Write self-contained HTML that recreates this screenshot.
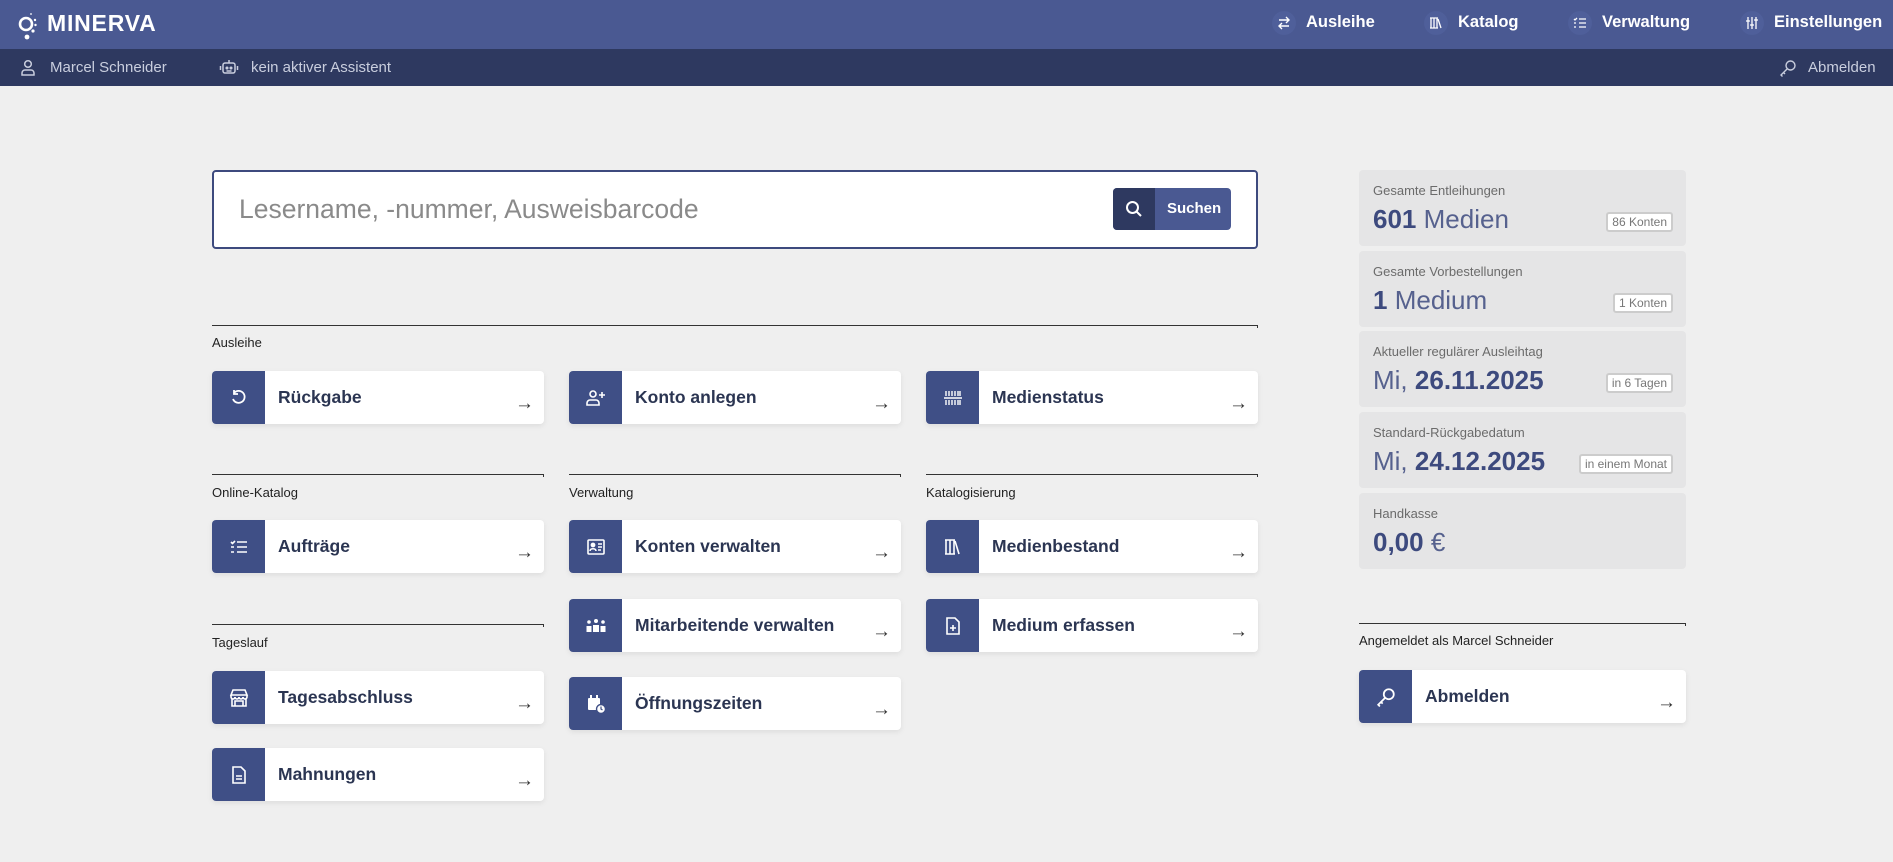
<!DOCTYPE html>
<html><head><meta charset="utf-8"><style>
*{box-sizing:border-box;margin:0;padding:0}
body{width:1893px;height:862px;background:#efefef;font-family:"Liberation Sans",sans-serif;position:relative;overflow:hidden;color:#2b3552}
.a{position:absolute}
.nav{left:0;top:0;width:1893px;height:49px;background:#4a5992}
.sub{left:0;top:49px;width:1893px;height:37px;background:#2e3960}
.nv{position:absolute;top:0;height:45px;display:flex;align-items:center;color:#fff;font-weight:bold;font-size:16.5px}
.nv .ic{width:24px;height:24px;border-radius:50%;background:#4f5f9a;display:flex;align-items:center;justify-content:center;margin-right:10px}
.sb{position:absolute;top:49px;height:37px;display:flex;align-items:center;color:#c9cede;font-size:15px}
.rule{position:absolute;height:1px;background:#333;border-left:1px solid #333}
.rule:after{content:"";position:absolute;right:0;top:0;width:1px;height:3px;background:#333}
.lbl{position:absolute;font-size:13px;color:#222}
.card{position:absolute;width:332px;height:53px;background:#fff;border-radius:4px;box-shadow:0 2px 6px rgba(0,0,0,.08);overflow:hidden}
.card .ib{position:absolute;left:0;top:0;width:53px;height:53px;background:#3f4f86;display:flex;align-items:center;justify-content:center}
.card .t{position:absolute;left:66px;top:16px;font-size:17.5px;font-weight:bold;color:#2b3552}
.card .ar{position:absolute;right:10px;top:22px;font-size:19px;color:#333}
.stat{position:absolute;left:1359px;width:327px;height:76px;background:#e5e5e6;border-radius:4px}
.stat .l{position:absolute;left:14px;top:13px;font-size:13px;color:#6b6b6b}
.stat .v{position:absolute;left:14px;top:34px;font-size:26px;color:#3d4a7e}
.stat .v b{font-weight:bold}
.stat .v span{font-weight:300;color:#56618e}
.bd{position:absolute;right:13px;top:42px;border:2px solid #ccc;background:#fff;border-radius:3px;font-size:12px;color:#777;padding:1px 4px}
</style></head><body>
<div class="a nav"></div><div class="a sub"></div>
<svg class="a" style="left:17px;top:11px" width="26" height="34" viewBox="0 0 26 34"><circle cx="9" cy="13" r="6" fill="none" stroke="#fff" stroke-width="2.6"/><circle cx="18" cy="9" r="1.2" fill="#fff"/><circle cx="18.5" cy="14" r="1.2" fill="#fff"/><circle cx="16" cy="20" r="1.6" fill="#fff"/><circle cx="10" cy="26" r="2.4" fill="#fff"/><circle cx="14" cy="3" r=".9" fill="#fff"/></svg>
<div class="a" style="left:47px;top:10px;color:#fff;font-weight:bold;font-size:23px;letter-spacing:.8px">MINERVA</div>
<div class="nv" style="left:1272px"><span class="ic"><svg width="14" height="14" viewBox="0 0 14 14" fill="none" stroke="#fff" stroke-width="1.4"><path d="M2 4h10M9 1l3 3-3 3M12 10H2M5 7l-3 3 3 3"/></svg></span>Ausleihe</div>
<div class="nv" style="left:1424px"><span class="ic"><svg width="14" height="14" viewBox="0 0 14 14" fill="none" stroke="#fff" stroke-width="1.3"><path d="M2 2v10M5 2v10M8 2v10M1 2h8M1 12h8M9 3l3 9"/></svg></span>Katalog</div>
<div class="nv" style="left:1568px"><span class="ic"><svg width="14" height="14" viewBox="0 0 14 14" fill="none" stroke="#fff" stroke-width="1.3"><path d="M1 3l1 1 2-2M6 3h7M1 7h2M6 7h7M1 11h2M6 11h7"/></svg></span>Verwaltung</div>
<div class="nv" style="left:1740px"><span class="ic"><svg width="14" height="14" viewBox="0 0 14 14" fill="none" stroke="#fff" stroke-width="1.3"><path d="M3 1v12M7 1v12M11 1v12M1 5h4M5 9h4M9 4h4"/></svg></span>Einstellungen</div>
<div class="sb" style="left:20px"><svg width="16" height="17" viewBox="0 0 16 17" fill="none" stroke="#c9cede" stroke-width="1.5"><circle cx="8" cy="5" r="3.3"/><path d="M2 16v-2a3 3 0 013-3h6a3 3 0 013 3v2z"/></svg><span style="margin-left:14px">Marcel Schneider</span></div>
<div class="sb" style="left:219px"><svg width="20" height="17" viewBox="0 0 20 17" fill="none" stroke="#c9cede" stroke-width="1.5"><rect x="4" y="4" width="12" height="10" rx="2"/><path d="M10 1v3M1.5 7v4M18.5 7v4"/><circle cx="8" cy="9" r=".8" fill="#c9cede"/><circle cx="12" cy="9" r=".8" fill="#c9cede"/><path d="M7.5 12h5"/></svg><span style="margin-left:12px">kein aktiver Assistent</span></div>
<div class="sb" style="left:1779px"><svg width="18" height="18" viewBox="0 0 18 18" fill="none" stroke="#c9cede" stroke-width="1.4"><circle cx="11.5" cy="6.5" r="4.5"/><path d="M8.3 9.7L2 16l1.5 1.5M4.5 13.5l1.5 1.5"/></svg><span style="margin-left:11px">Abmelden</span></div>

<div class="a" style="left:212px;top:170px;width:1046px;height:79px;background:#fff;border:2px solid #3d4a7e;border-radius:4px"></div>
<div class="a" style="left:239px;top:194px;font-size:26.5px;color:#8a8a8a">Lesername, -nummer, Ausweisbarcode</div>
<div class="a" style="left:1113px;top:188px;width:118px;height:42px;background:#4a5992;border-radius:4px;overflow:hidden"><div style="position:absolute;left:0;top:0;width:42px;height:42px;background:#2e3960;display:flex;align-items:center;justify-content:center"><svg width="18" height="18" viewBox="0 0 18 18" fill="none" stroke="#fff" stroke-width="2"><circle cx="7.5" cy="7.5" r="5.5"/><path d="M11.5 11.5L16 16"/></svg></div><div style="position:absolute;left:54px;top:12px;color:#fff;font-weight:bold;font-size:15px">Suchen</div></div>

<div class="rule" style="left:212px;top:325px;width:1046px"></div>
<div class="lbl" style="left:212px;top:335px">Ausleihe</div>
<div class="rule" style="left:212px;top:474px;width:332px"></div><div class="lbl" style="left:212px;top:485px">Online-Katalog</div>
<div class="rule" style="left:569px;top:474px;width:332px"></div><div class="lbl" style="left:569px;top:485px">Verwaltung</div>
<div class="rule" style="left:926px;top:474px;width:332px"></div><div class="lbl" style="left:926px;top:485px">Katalogisierung</div>
<div class="rule" style="left:212px;top:624px;width:332px"></div><div class="lbl" style="left:212px;top:635px">Tageslauf</div>

<div class="card" style="left:212px;top:371px"><div class="ib"><svg width="18" height="18" viewBox="0 0 18 18" fill="none" stroke="#fff" stroke-width="1.8"><path d="M4 4a6 6 0 11-1 6"/><path d="M4 1v4h4"/></svg></div><div class="t">Rückgabe</div><div class="ar">→</div></div>
<div class="card" style="left:569px;top:371px"><div class="ib"><svg width="20" height="18" viewBox="0 0 20 18" fill="none" stroke="#fff" stroke-width="1.6"><circle cx="7" cy="5" r="3"/><path d="M1 16v-2a3 3 0 013-3h6a3 3 0 013 3v2zM16 3v6M13 6h6"/></svg></div><div class="t">Konto anlegen</div><div class="ar">→</div></div>
<div class="card" style="left:926px;top:371px"><div class="ib"><svg width="20" height="16" viewBox="0 0 20 16" fill="none" stroke="#fff" stroke-width="1.4"><path d="M3 1v5M6 1v5M9 1v5M12 1v5M15 1v5M17 1v5M1 8h18M3 10v5M6 10v5M9 10v5M12 10v5M15 10v5M17 10v5"/></svg></div><div class="t">Medienstatus</div><div class="ar">→</div></div>
<div class="card" style="left:212px;top:520px"><div class="ib"><svg width="18" height="16" viewBox="0 0 18 16" fill="none" stroke="#fff" stroke-width="1.6"><path d="M1 3l1.5 1.5L5 2M7 3h10M1 8h3M7 8h10M1 13h3M7 13h10"/></svg></div><div class="t">Aufträge</div><div class="ar">→</div></div>
<div class="card" style="left:569px;top:520px"><div class="ib"><svg width="18" height="16" viewBox="0 0 18 16" fill="none" stroke="#fff" stroke-width="1.6"><rect x="1" y="1" width="16" height="14" rx="1"/><circle cx="6" cy="6" r="1.6" fill="#fff"/><path d="M3 12c0-3 6-3 6 0M11 5h4M11 8h4M11 11h3"/></svg></div><div class="t">Konten verwalten</div><div class="ar">→</div></div>
<div class="card" style="left:926px;top:520px"><div class="ib"><svg width="18" height="18" viewBox="0 0 18 18" fill="none" stroke="#fff" stroke-width="1.6"><path d="M2 2v14M6 2v14M10 2v14M1 2h10M1 16h10M11 3l4 13"/></svg></div><div class="t">Medienbestand</div><div class="ar">→</div></div>
<div class="card" style="left:569px;top:599px"><div class="ib"><svg width="22" height="16" viewBox="0 0 22 16" fill="#fff"><circle cx="11" cy="3" r="2"/><circle cx="4" cy="4" r="1.8"/><circle cx="18" cy="4" r="1.8"/><path d="M8 7h6v7h-6zM1.5 8h5v6h-5zM15.5 8h5v6h-5z"/></svg></div><div class="t">Mitarbeitende verwalten</div><div class="ar">→</div></div>
<div class="card" style="left:926px;top:599px"><div class="ib"><svg width="16" height="18" viewBox="0 0 16 18" fill="none" stroke="#fff" stroke-width="1.6"><path d="M2 1h8l4 4v12H2z"/><path d="M8 8v6M5 11h6"/></svg></div><div class="t">Medium erfassen</div><div class="ar">→</div></div>
<div class="card" style="left:569px;top:677px"><div class="ib"><svg width="20" height="20" viewBox="0 0 20 20" fill="#fff"><rect x="2" y="4" width="12" height="12" rx="1"/><path d="M4 1h2v4H4zM10 1h2v4h-2z"/><circle cx="15" cy="15" r="4.5" stroke="#3f4f86" stroke-width="1.4"/><path d="M15 12.5v2.5l1.5 1" stroke="#3f4f86" stroke-width="1.2" fill="none"/></svg></div><div class="t">Öffnungszeiten</div><div class="ar">→</div></div>
<div class="card" style="left:212px;top:671px"><div class="ib"><svg width="20" height="18" viewBox="0 0 20 18" fill="none" stroke="#fff" stroke-width="1.6"><path d="M2 6l2-5h12l2 5zM2 6v2a2 2 0 004 0 2 2 0 004 0 2 2 0 004 0 2 2 0 004 0V6M3 10v7h14v-7M6 17v-5h8v5"/></svg></div><div class="t">Tagesabschluss</div><div class="ar">→</div></div>
<div class="card" style="left:212px;top:748px"><div class="ib"><svg width="14" height="18" viewBox="0 0 14 18" fill="none" stroke="#fff" stroke-width="1.6"><path d="M1 1h8l4 4v12H1z"/><path d="M4 10h6M4 13h6"/></svg></div><div class="t">Mahnungen</div><div class="ar">→</div></div>

<div class="stat" style="top:170px"><div class="l">Gesamte Entleihungen</div><div class="v"><b>601</b> <span>Medien</span></div><div class="bd">86 Konten</div></div>
<div class="stat" style="top:251px"><div class="l">Gesamte Vorbestellungen</div><div class="v"><b>1</b> <span>Medium</span></div><div class="bd">1 Konten</div></div>
<div class="stat" style="top:331px"><div class="l">Aktueller regulärer Ausleihtag</div><div class="v"><span>Mi,</span> <b>26.11.2025</b></div><div class="bd">in 6 Tagen</div></div>
<div class="stat" style="top:412px"><div class="l">Standard-Rückgabedatum</div><div class="v"><span>Mi,</span> <b>24.12.2025</b></div><div class="bd">in einem Monat</div></div>
<div class="stat" style="top:493px"><div class="l">Handkasse</div><div class="v"><b>0,00</b> <span>€</span></div></div>

<div class="rule" style="left:1359px;top:623px;width:327px"></div>
<div class="lbl" style="left:1359px;top:633px">Angemeldet als Marcel Schneider</div>
<div class="card" style="left:1359px;top:670px;width:327px"><div class="ib"><svg width="20" height="20" viewBox="0 0 18 18" fill="none" stroke="#fff" stroke-width="1.6"><circle cx="11.5" cy="6.5" r="4.5"/><path d="M8.3 9.7L2 16l1.5 1.5M4.5 13.5l1.5 1.5"/></svg></div><div class="t">Abmelden</div><div class="ar">→</div></div>
</body></html>
